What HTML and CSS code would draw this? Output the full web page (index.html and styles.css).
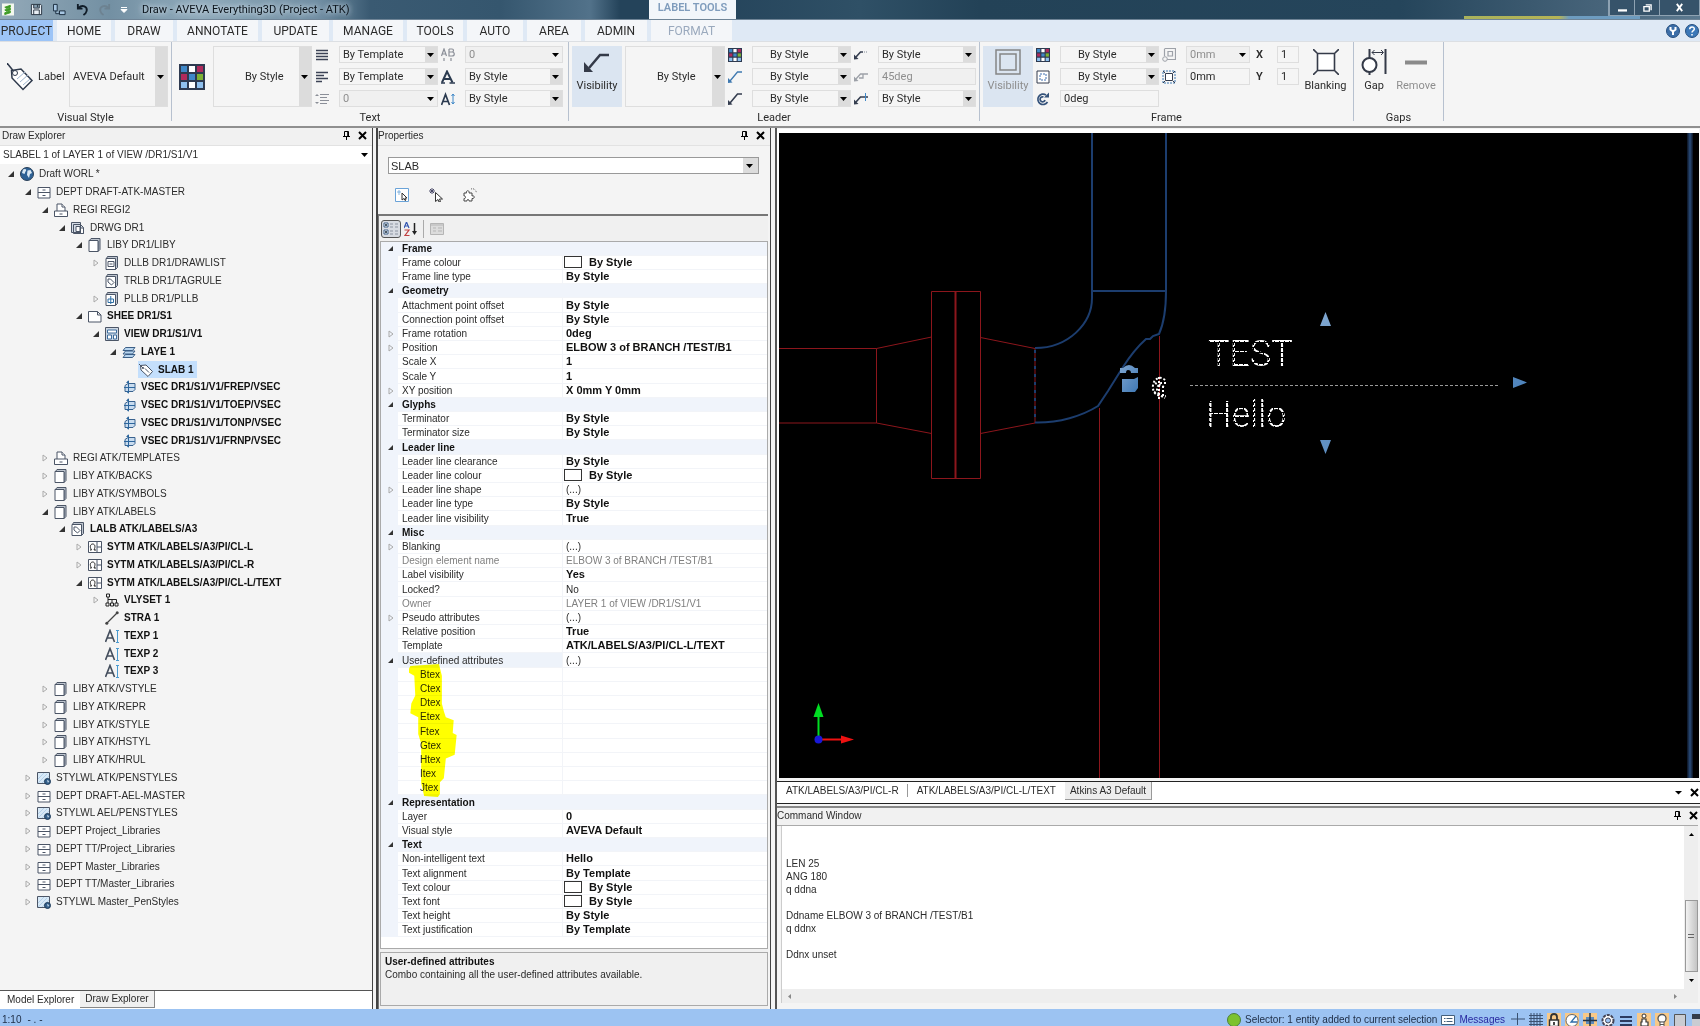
FILE: index.html
```html
<!DOCTYPE html>
<html lang="en">
<head>
<meta charset="utf-8">
<title>Draw - AVEVA Everything3D (Project - ATK)</title>
<link rel="stylesheet" href="styles.css">
</head>
<body>
<svg class="defs" aria-hidden="true">
  <symbol id="world" viewBox="0 0 14 14"><circle cx="7" cy="7" r="6.5" fill="#2e6296" stroke="#2b4058"/><path d="M3 2.5C6 1 7 3 5.500 4.500L4.500 7 2 6zM7.500 3.500l3-.5 1.500 3-2 1-1 4-2-3z" fill="#dceaf5"/></symbol>
  <symbol id="dept" viewBox="0 0 14 14"><path d="M1 2.500h12v10.500H1zM1 7.500h12M5.500 5h3M5.500 10.500h3" fill="#fff" stroke="#4b5566"/></symbol>
  <symbol id="regi" viewBox="0 0 14 14"><path d="M3 8V1h5l3 3v4" fill="#fff" stroke="#4b5566"/><path d="M.5 8h13v5.500H.5zM8 1v3h3M5.500 11h3" fill="#fff" stroke="#4b5566"/></symbol>
  <symbol id="drwg" viewBox="0 0 14 14"><path d="M.5 1.500h9v10h-9zM2.500 3.500h7l3 3v6h-10z" fill="#d5dce6" stroke="#4b5566"/><path d="M5 5.500h4v5H5zM9.500 7h3v5.500h-3z" fill="#fff" stroke="#4b5566"/></symbol>
  <symbol id="liby" viewBox="0 0 14 14"><path d="M3 .5h9v11l-2 2V3H1z" fill="#bdc4ce" stroke="#4b5566"/><path d="M1 2.500h9v11H1z" fill="#fff" stroke="#4b5566"/></symbol>
  <symbol id="dllb" viewBox="0 0 14 14"><path d="M2.500.5h10v11l-2 2H1.500V2.500z" fill="#bdc4ce" stroke="#4b5566"/><path d="M1 2.500h9.500v11H1zM3 5.500h6v5H3zM4.500 8h3" fill="#fff" stroke="#4b5566"/></symbol>
  <symbol id="trlb" viewBox="0 0 14 14"><path d="M2.500.5h10v11l-2 2H1.500V2.500z" fill="#bdc4ce" stroke="#4b5566"/><path d="M1 2.500h9.500v11H1zM3 5h2.500L9 8.500 6.500 11 3 8z" fill="#fff" stroke="#4b5566"/></symbol>
  <symbol id="pllb" viewBox="0 0 14 14"><path d="M2.500.5h10v11l-2 2H1.500V2.500z" fill="#bdc4ce" stroke="#4b5566"/><path d="M1 2.500h9.500v11H1z" fill="#fff" stroke="#4b5566"/><path d="M5.750 4v8M3 7h5.500v3.500H3z" fill="none" stroke="#2c6da3"/></symbol>
  <symbol id="shee" viewBox="0 0 14 14"><path d="M.5 2.500h9l3.500 3.500v7H.5zM9.500 2.500V6H13" fill="#fff" stroke="#4b5566"/></symbol>
  <symbol id="view" viewBox="0 0 14 14"><path d="M.5.500h13v13H.5z" fill="#cdd7e3" stroke="#4b5566"/><path d="M2.500 3h9v3h-9zM2.500 8h4v4h-4zM8.500 8h3v4h-3z" fill="#fff" stroke="#3c6c9c"/></symbol>
  <symbol id="laye" viewBox="0 0 14 14"><path d="M1 12.500 3.500 9.500h9.500L10.500 12.500zM1 9 3.500 6h9.500L10.500 9zM1 5.500 3.500 2.500h9.500L10.500 5.500z" fill="#b8d5ef" stroke="#3c5f86"/></symbol>
  <symbol id="slab" viewBox="0 0 14 14"><path d="M1.500 2.500 7 2l6.500 6.500-4.500 5L2 7z" fill="#fff" stroke="#4b5566"/><path d="M0 1l4 4M6 5.500l4 4" stroke="#4b5566"/><circle cx="4" cy="5" r="1" fill="#4b5566"/></symbol>
  <symbol id="vsec" viewBox="0 0 14 14"><path d="M3 5.500 6 3.500h7v6l-2 2H3z" fill="#c9dcef" stroke="#39628e"/><path d="M2 7.500h11M6.500 1v12" stroke="#2d669d"/><path d="M4 3 6.500 0v3zM4 11h2.500v3z" fill="#2d669d"/></symbol>
  <symbol id="sytm" viewBox="0 0 14 14"><path d="M.5 1.500h13v11H.5zM9 1.500v11M9 7h4.500" fill="#fff" stroke="#4b5566"/><path d="M2 10h1.500C1 6 3 4 4.750 4S8 6 6 10h2" fill="none" stroke="#222"/></symbol>
  <symbol id="vly" viewBox="0 0 14 14"><path d="M1.500 1h3v3h-3zM1 10h3v3H1zM5.500 10h3v3h-3zM10 10h3v3h-3zM3 4v6M3 6.500h8.500V10M7 6.500V10" fill="none" stroke="#222"/></symbol>
  <symbol id="stra" viewBox="0 0 14 14"><path d="M1.500 12.500l11-11" stroke="#444" stroke-width="1.300"/><circle cx="1.800" cy="12.200" r="1.500" fill="#444"/><circle cx="12.200" cy="1.800" r="1.500" fill="#444"/></symbol>
  <symbol id="texp" viewBox="0 0 14 14"><path d="M.5 13 5 1.500 9.500 13M2.500 9h5.500" fill="none" stroke="#434d5c" stroke-width="1.600"/><path d="M12.500 2v11M11 1.500h3M11 13.500h3" stroke="#4a9ad0"/></symbol>
  <symbol id="styl" viewBox="0 0 14 14"><path d="M.5 1.500h12v11H.5z" fill="#d8e9f7" stroke="#4b5566"/><path d="M1 8l6-6M1 12l9-9M5 12l7-7" stroke="#b3d0ea"/><circle cx="10.500" cy="10.500" r="3" fill="#34608c" stroke="#1f3b58"/><path d="M10 9l2 1-1 2z" fill="#dceaf5"/></symbol>
  <symbol id="pin" viewBox="0 0 9 9"><path d="M2.500.500h4v5h-4zM1 5.500h7M4.500 5.500V9M5.700 1v4" fill="none" stroke="#000"/></symbol>
  <symbol id="x" viewBox="0 0 9 9"><path d="M1 1l7 7M8 1L1 8" stroke="#000" stroke-width="2"/></symbol>
  <symbol id="palette" viewBox="0 0 26 26"><path d="M0 0h26v26H0z" fill="#2e3a50"/><path d="M2 2h6v6H2zM10 10h6v6h-6z" fill="#3f88c8"/><path d="M10 2h6v6h-6zM10 18h6v6h-6z" fill="#fff"/><path d="M18 2h6v6h-6zM2 10h6v6H2z" fill="#b02a5c"/><path d="M18 10h6v6h-6z" fill="#7db233"/><path d="M2 18h6v6H2zM18 18h6v6h-6z" fill="#8fc0ee"/></symbol>
  <symbol id="justify" viewBox="0 0 14 14"><path d="M1 2.500h12M1 5.500h12M1 8.500h12M1 11.500h12" stroke="#3c4356" stroke-width="1.600"/></symbol>
  <symbol id="left" viewBox="0 0 14 14"><path d="M1 2.500h12M1 5.500h8M1 8.500h12M1 11.500h6" stroke="#3c4356" stroke-width="1.500"/></symbol>
  <symbol id="spacing" viewBox="0 0 14 14"><path d="M5 2.500h9M5 5.500h7M5 8.500h9M5 11.500h7" stroke="#8b8f98"/><path d="M0 4l2-2 2 2zM0 10l2 2 2-2z" fill="#8b8f98"/></symbol>
  <symbol id="ab" viewBox="0 0 14 14"><path d="M.5 8 3 1l2.500 7M1.500 6h3M8 1h3c2 0 2 3 0 3H8.500M11 4c3 0 3 4 0 4H8V1M3 10v3M10 10v3" fill="none" stroke="#8b8f98" stroke-width="1.200"/></symbol>
  <symbol id="font" viewBox="0 0 14 14"><path d="M1 12.500 6 1.500l5.500 11M3 9h6" fill="none" stroke="#2c3b50" stroke-width="2"/><path d="M0 13h4M8.500 13H14" stroke="#2c3b50" stroke-width="1.500"/></symbol>
  <symbol id="fontht" viewBox="0 0 14 14"><path d="M.5 13 4.500 2.500l4 10.500M2 9.500h5" fill="none" stroke="#2c3b50" stroke-width="1.700"/><path d="M12 2v10M10.500 4 12 2l1.500 2M10.500 10l1.500 2 1.500-2" fill="none" stroke="#3f88c8"/></symbol>
  <symbol id="leadb" viewBox="0 0 14 14"><path d="M14 2H9.500L2 11" fill="none" stroke="#3f79b0" stroke-width="1.300"/><path d="M0 13V8l4.500 4.500z" fill="#3f79b0"/></symbol>
  <symbol id="leadd" viewBox="0 0 14 14"><path d="M14 2H9.500L2 11" fill="none" stroke="#343d4f" stroke-width="1.600"/><path d="M0 13V8l4.500 4.500z" fill="#343d4f"/></symbol>
  <symbol id="leads" viewBox="0 0 14 14"><path d="M9 4H6.500L2 9" fill="none" stroke="#343d4f" stroke-width="1.600"/><path d="M0 11.500V6.500L4.500 11z" fill="#343d4f"/><path d="M10 4h4" stroke="#7e8795" stroke-dasharray="1 1"/></symbol>
  <symbol id="leadg" viewBox="0 0 14 14"><path d="M14 4H6.500L2 9M9 4v4H5" fill="none" stroke="#9da1a8" stroke-width="1.300"/><path d="M0 11.500V6.500L4.500 11z" fill="#9da1a8"/></symbol>
  <symbol id="leadp" viewBox="0 0 14 14"><path d="M14 5H6.500L2 10" fill="none" stroke="#343d4f" stroke-width="1.600"/><path d="M0 12.500V7.500L4.500 12z" fill="#343d4f"/><path d="M11.500 1v8" stroke="#3f88c8"/></symbol>
  <symbol id="dotted" viewBox="0 0 14 14"><path d="M1 1h12v12H1z" fill="#fff" stroke="#343d4f"/><path d="M4 4h6v6H4z" fill="none" stroke="#3f6fb0" stroke-dasharray="2 1"/></symbol>
  <symbol id="rotate" viewBox="0 0 14 14"><path d="M11.500 10A5.200 5.200 0 1 1 10 3M9 8A2.500 2.500 0 1 1 7.500 5" fill="none" stroke="#34527a" stroke-width="1.700"/><path d="M8 5.500h5V.5z" fill="#34527a"/></symbol>
  <symbol id="offs" viewBox="0 0 14 14"><path d="M2.500.500h11v11H5M6 3.500h4.500v4.500H6zM2.500 1v7" fill="none" stroke="#9da1a8" stroke-width="1.200"/><circle cx="3" cy="11" r="2.300" fill="#f4f4f4" stroke="#9da1a8"/></symbol>
  <symbol id="marg" viewBox="0 0 14 14"><path d="M1 1h12v12H1z" fill="none" stroke="#3f79b0" stroke-dasharray="2 1"/><path d="M3.500 3.500h7v7h-7zM1 1l2 2M13 1l-2 2M1 13l2-2M13 13l-2-2" fill="#fff" stroke="#343d4f"/></symbol>
</svg>

<header class="titlebar">
  <svg class="logo" viewBox="0 0 13 13"><path d="M0 0h13v13H0z" fill="#f4f8ee"/><path d="M3 4l6-2v2L5 5.500zM3 7l6-2v2L5 8.500zM3 10l6-2v2l-6 2z" fill="#3d9a24" stroke="#3d9a24"/></svg>
  <svg class="qa" viewBox="0 0 14 14"><path d="M1.500 1.500h10l1 1v10h-11zM4 1.500v4h6v-4M4 12.500v-5h6v5M8 2v2.500" fill="#e8eef4" stroke="#26323f"/></svg>
  <svg class="qa link" viewBox="0 0 14 14"><path d="M.5 1.500h4v7h-4zM7 8.500h6v4H7zM3 8.500v3h4" fill="#a7c6e2" stroke="#16283a"/></svg>
  <svg class="qa undo" viewBox="0 0 14 14"><path d="M2 1v5h5M2.500 5.500C7 1 12.500 4 11.500 8.500 11 11 9.500 12 8 13" fill="none" stroke="#101c28" stroke-width="2"/></svg>
  <svg class="qa redo" viewBox="0 0 14 14"><path d="M12 1v5H7M11.500 5.500C7 1 1.500 4 2.500 8.500 3 11 4.500 12 6 13" fill="none" stroke="#66747f" stroke-width="2"/></svg>
  <svg class="more" viewBox="0 0 8 8"><path d="M1 1.500h6M1 3.500l3 3 3-3z" fill="#fff" stroke="#fff"/></svg>
  <h1>Draw - AVEVA Everything3D (Project - ATK)</h1>
  <span class="context">LABEL TOOLS</span>
  <span class="glass"></span>
  <div class="winbtns">
    <button aria-label="Minimise"><svg viewBox="0 0 10 10"><path d="M0 7h10v2.500H0z" fill="#fff"/></svg></button>
    <button aria-label="Restore"><svg viewBox="0 0 10 10"><path d="M3 2h6v6M1 4h6v5H1z" fill="none" stroke="#fff" stroke-width="1.500"/></svg></button>
    <button class="close" aria-label="Close"><svg viewBox="0 0 10 10"><path d="M2 1l6 8M8 1L2 9" stroke="#fff" stroke-width="2"/></svg></button>
  </div>
</header>

<nav class="tabs">
  <button class="project">PROJECT</button>
  <button class="w53">HOME</button>
  <button class="w57">DRAW</button>
  <button class="w81">ANNOTATE</button>
  <button class="w67">UPDATE</button>
  <button class="w70">MANAGE</button>
  <button class="w56">TOOLS</button>
  <button class="w56">AUTO</button>
  <button class="w53">AREA</button>
  <button class="w62">ADMIN</button>
  <button class="w81 format">FORMAT</button>
  <span class="help">
    <svg viewBox="0 0 14 14"><circle cx="7" cy="7" r="6.500" fill="#3c6ea8" stroke="#28507f"/><path d="M4.500 3v2.500L7 7.500l2.500-2V3M7 7v4" fill="none" stroke="#fff" stroke-width="2"/></svg>
    <svg viewBox="0 0 14 14"><circle cx="7" cy="7" r="6.500" fill="#3c78b8" stroke="#28507f"/><path d="M4.700 5.200c0-3 4.800-3 4.600 0C9.200 6.700 7 6.500 7 8.500M7 10v1.500" fill="none" stroke="#fff" stroke-width="1.500"/></svg>
  </span>
</nav>

<section class="ribbon" aria-label="Format">
  <div class="group">
    <div class="tools g-visual">
      <svg class="span tag" viewBox="0 0 27 28"><path d="M4.500 7.500 14 6l11 11.500L16 26.500 5 15z" fill="#fff" stroke="#2f3a4c" stroke-width="1.500"/><path d="M10 16l8-7M13 19l8-7M16 22l7-6" stroke="#9fb6cf"/><path d="M0 0l8 10" stroke="#2f3a4c" stroke-width="1.500"/><circle cx="8" cy="10" r="2.500" fill="#fff" stroke="#2f3a4c"/></svg>
      <label class="span" for="vs">Label</label>
      <select id="vs" class="span"><option>AVEVA Default</option></select>
    </div>
    <h2>Visual Style</h2>
  </div>
  <div class="group">
    <div class="tools g-text">
      <svg class="span big"><use href="#palette"/></svg>
      <select class="span pad28" aria-label="Text colour"><option>By Style</option></select>
      <svg><use href="#justify"/></svg><select aria-label="Alignment"><option>By Template</option></select>
      <svg><use href="#ab"/></svg><select aria-label="Spacing" disabled><option>0</option></select>
      <svg><use href="#left"/></svg><select aria-label="Justification"><option>By Template</option></select>
      <svg><use href="#font"/></svg><select aria-label="Font"><option>By Style</option></select>
      <svg><use href="#spacing"/></svg><select aria-label="Line spacing" disabled><option>0</option></select>
      <svg><use href="#fontht"/></svg><select aria-label="Height"><option>By Style</option></select>
    </div>
    <h2>Text</h2>
  </div>
  <div class="group">
    <div class="tools g-leader">
      <button class="span tool on"><svg viewBox="0 0 26 26"><path d="M25 6H16L5 19" fill="none" stroke="#343a48" stroke-width="2.500"/><path d="M0 23V13l9 10z" fill="#343a48"/></svg>Visibility</button>
      <select class="span pad28" aria-label="Leader style"><option>By Style</option></select>
      <svg><use href="#palette"/></svg><select class="pad14" aria-label="Leader colour"><option>By Style</option></select>
      <svg><use href="#leads"/></svg><select aria-label="Clearance"><option>By Style</option></select>
      <svg><use href="#leadb"/></svg><select class="pad14" aria-label="Line type"><option>By Style</option></select>
      <svg><use href="#leadg"/></svg><input aria-label="Angle" value="45deg" disabled>
      <svg><use href="#leadd"/></svg><select class="pad14" aria-label="Shape"><option>By Style</option></select>
      <svg><use href="#leadp"/></svg><select aria-label="Terminator size"><option>By Style</option></select>
    </div>
    <h2>Leader</h2>
  </div>
  <div class="group">
    <div class="tools g-frame">
      <button class="span tool on dim"><svg viewBox="0 0 26 26"><path d="M1 1h24v24H1zM5 5h16v16H5z" fill="none" stroke="#858585" stroke-width="1.500"/></svg>Visibility</button>
      <svg><use href="#palette"/></svg><select class="pad14" aria-label="Frame colour"><option>By Style</option></select>
      <svg><use href="#offs"/></svg><select aria-label="Offset" disabled><option>0mm</option></select>
      <label for="sx">X</label><input id="sx" value="1">
      <button class="span tool"><svg viewBox="0 0 26 26"><path d="M4.500 4.500h17v17h-17zM0 0l4.500 4.500M26 0l-4.500 4.500M0 26l4.500-4.500M26 26l-4.500-4.500" fill="#fff" stroke="#343a48" stroke-width="1.600"/></svg>Blanking</button>
      <svg><use href="#dotted"/></svg><select class="pad14" aria-label="Frame line type"><option>By Style</option></select>
      <svg><use href="#marg"/></svg><input aria-label="Margin" value="0mm">
      <label for="sy">Y</label><input id="sy" value="1">
      <svg><use href="#rotate"/></svg><input aria-label="Rotation" value="0deg">
    </div>
    <h2>Frame</h2>
  </div>
  <div class="group">
    <div class="tools g-gaps">
      <button class="span tool"><svg viewBox="0 0 26 26"><circle cx="8.500" cy="16" r="7" fill="#fff" stroke="#343a48" stroke-width="2"/><path d="M8.500 0v9M8.500 23v3M24.500 0v25" stroke="#343a48" stroke-width="2"/><path d="M11 3.500h11M13.500 1l-2.500 2.500L13.500 6M20 1l2.500 2.500L20 6" fill="none" stroke="#343a48"/></svg>Gap</button>
      <button class="span tool" disabled><svg viewBox="0 0 26 26"><path d="M2 11.500h22v4H2z" fill="#8a8a8a"/></svg>Remove</button>
    </div>
    <h2>Gaps</h2>
  </div>
</section>

<main>
  <aside class="explorer">
    <div class="head"><h2>Draw Explorer</h2><svg><use href="#pin"/></svg><svg><use href="#x"/></svg></div>
    <select class="current" aria-label="Current element"><option>SLABEL 1 of LAYER 1 of VIEW /DR1/S1/V1</option></select>
    <ul class="tree" role="tree">
      <li class="l0 open"><svg><use href="#world"/></svg>Draft WORL *</li>
      <li class="l1 open"><svg><use href="#dept"/></svg>DEPT DRAFT-ATK-MASTER</li>
      <li class="l2 open"><svg><use href="#regi"/></svg>REGI REGI2</li>
      <li class="l3 open"><svg><use href="#drwg"/></svg>DRWG DR1</li>
      <li class="l4 open"><svg><use href="#liby"/></svg>LIBY DR1/LIBY</li>
      <li class="l5 shut"><svg><use href="#dllb"/></svg>DLLB DR1/DRAWLIST</li>
      <li class="l5"><svg><use href="#trlb"/></svg>TRLB DR1/TAGRULE</li>
      <li class="l5 shut"><svg><use href="#pllb"/></svg>PLLB DR1/PLLB</li>
      <li class="l4 open b"><svg><use href="#shee"/></svg>SHEE DR1/S1</li>
      <li class="l5 open b"><svg><use href="#view"/></svg>VIEW DR1/S1/V1</li>
      <li class="l6 open b"><svg><use href="#laye"/></svg>LAYE 1</li>
      <li class="l7 b sel"><span><svg><use href="#slab"/></svg>SLAB 1</span></li>
      <li class="l6 b"><svg><use href="#vsec"/></svg>VSEC DR1/S1/V1/FREP/VSEC</li>
      <li class="l6 b"><svg><use href="#vsec"/></svg>VSEC DR1/S1/V1/TOEP/VSEC</li>
      <li class="l6 b"><svg><use href="#vsec"/></svg>VSEC DR1/S1/V1/TONP/VSEC</li>
      <li class="l6 b"><svg><use href="#vsec"/></svg>VSEC DR1/S1/V1/FRNP/VSEC</li>
      <li class="l2 shut"><svg><use href="#regi"/></svg>REGI ATK/TEMPLATES</li>
      <li class="l2 shut"><svg><use href="#liby"/></svg>LIBY ATK/BACKS</li>
      <li class="l2 shut"><svg><use href="#liby"/></svg>LIBY ATK/SYMBOLS</li>
      <li class="l2 open"><svg><use href="#liby"/></svg>LIBY ATK/LABELS</li>
      <li class="l3 open b"><svg><use href="#trlb"/></svg>LALB ATK/LABELS/A3</li>
      <li class="l4 shut b"><svg><use href="#sytm"/></svg>SYTM ATK/LABELS/A3/PI/CL-L</li>
      <li class="l4 shut b"><svg><use href="#sytm"/></svg>SYTM ATK/LABELS/A3/PI/CL-R</li>
      <li class="l4 open b"><svg><use href="#sytm"/></svg>SYTM ATK/LABELS/A3/PI/CL-L/TEXT</li>
      <li class="l5 shut b"><svg><use href="#vly"/></svg>VLYSET 1</li>
      <li class="l5 b"><svg><use href="#stra"/></svg>STRA 1</li>
      <li class="l5 b"><svg><use href="#texp"/></svg>TEXP 1</li>
      <li class="l5 b"><svg><use href="#texp"/></svg>TEXP 2</li>
      <li class="l5 b"><svg><use href="#texp"/></svg>TEXP 3</li>
      <li class="l2 shut"><svg><use href="#liby"/></svg>LIBY ATK/VSTYLE</li>
      <li class="l2 shut"><svg><use href="#liby"/></svg>LIBY ATK/REPR</li>
      <li class="l2 shut"><svg><use href="#liby"/></svg>LIBY ATK/STYLE</li>
      <li class="l2 shut"><svg><use href="#liby"/></svg>LIBY ATK/HSTYL</li>
      <li class="l2 shut"><svg><use href="#liby"/></svg>LIBY ATK/HRUL</li>
      <li class="l1 shut"><svg><use href="#styl"/></svg>STYLWL ATK/PENSTYLES</li>
      <li class="l1 shut"><svg><use href="#dept"/></svg>DEPT DRAFT-AEL-MASTER</li>
      <li class="l1 shut"><svg><use href="#styl"/></svg>STYLWL AEL/PENSTYLES</li>
      <li class="l1 shut"><svg><use href="#dept"/></svg>DEPT Project_Libraries</li>
      <li class="l1 shut"><svg><use href="#dept"/></svg>DEPT TT/Project_Libraries</li>
      <li class="l1 shut"><svg><use href="#dept"/></svg>DEPT Master_Libraries</li>
      <li class="l1 shut"><svg><use href="#dept"/></svg>DEPT TT/Master_Libraries</li>
      <li class="l1 shut"><svg><use href="#styl"/></svg>STYLWL Master_PenStyles</li>
    </ul>
    <div class="foot"><button>Model Explorer</button><button class="active">Draw Explorer</button></div>
  </aside>

  <aside class="properties">
    <div class="head"><h2>Properties</h2><svg><use href="#pin"/></svg><svg><use href="#x"/></svg></div>
    <select class="type" aria-label="Element type"><option>SLAB</option></select>
    <div class="picks">
      <svg viewBox="0 0 14 14"><path d="M.5.500h13v13H.5z" fill="#fff" stroke="#6aa3d8"/><path d="M4 2v5M2 4h4" stroke="#6aa3d8" stroke-width=".8"/><path d="M7 5v7l2-1.500 1 2 1-.5-1-2h2z" fill="#fff" stroke="#333"/></svg>
      <svg viewBox="0 0 14 14"><path d="M3 0v6M0 3h6M1 1l4 4M5 1L1 5" stroke="#4a4a68"/><path d="M6.500 4.500v9l2.500-2 1 2.500 1.500-.5-1-2.500h3z" fill="#fff" stroke="#333"/></svg>
      <svg viewBox="0 0 14 14"><path d="M1 5h2.500c-1-3 3.500-3 2.500 0h3v3c3-1 3 3 0 2.500V13H6c.5-2-2.500-2-2 0H1v-2.500c2 .5 2-3 0-2.500z" fill="#fff" stroke="#444"/><path d="M8 1c3-1 5 1 5.500 4" fill="none" stroke="#666" stroke-dasharray="1 1"/></svg>
    </div>
    <div class="sheet">
      <div class="sort">
        <button class="pressed" aria-label="Categorised"><svg viewBox="0 0 16 14"><path d="M1 1h4v4H1zM1 8h4v4H1z" fill="#fff" stroke="#3c5f86"/><path d="M2 3h2M3 2v2M2 10h2M3 9v2" stroke="#123"/><path d="M7 2h3M7 5h3M7 9h3M7 12h3M12 2h3M12 5h3M12 9h3M12 12h3" stroke="#8b93a0"/></svg></button>
        <button aria-label="Alphabetical"><svg viewBox="0 0 14 14"><path d="M0 6 2.500 0 5 6M1 4h3" fill="none" stroke="#3355b0" stroke-width="1.200"/><path d="M.5 8H5l-4 5.500h4.500" fill="none" stroke="#c04040" stroke-width="1.200"/><path d="M10.500 1v9" stroke="#222" stroke-width="1.500"/><path d="M8 9h5l-2.500 4z" fill="#222"/></svg></button>
        <span class="bar"></span>
        <button aria-label="Property pages" disabled><svg viewBox="0 0 14 14"><path d="M.5 1.500h13v11H.5z" fill="#dcdcdc" stroke="#b5b5b5"/><path d="M1 3h12M3 6h3M8 6h4M3 9h3M8 9h4" stroke="#b5b5b5"/></svg></button>
      </div>
      <div class="gridbox">
        <svg class="marker" viewBox="0 0 48 136" aria-hidden="true"><path d="M1 2 30 0l3 12 0 28 2 8 2 6 8 3-1 13 4 2-2 20-9 4-2 20-4 4 0 12-2 3-14-1-3-13 0-40-3-10 0-17-8-4 1-10 4-8-1-20-7-4z" fill="#ff0"/></svg>
        <table>
          <colgroup><col class="c-mark"><col class="c-name"><col></colgroup>
          <tbody>
            <tr class="cat"><th class="m open"></th><th colspan="2">Frame</th></tr>
            <tr><td class="m"></td><td>Frame colour</td><td class="v"><i></i>By Style</td></tr>
            <tr><td class="m"></td><td>Frame line type</td><td class="v">By Style</td></tr>
            <tr class="cat"><th class="m open"></th><th colspan="2">Geometry</th></tr>
            <tr><td class="m"></td><td>Attachment point offset</td><td class="v">By Style</td></tr>
            <tr><td class="m"></td><td>Connection point offset</td><td class="v">By Style</td></tr>
            <tr><td class="m shut"></td><td>Frame rotation</td><td class="v">0deg</td></tr>
            <tr><td class="m shut"></td><td>Position</td><td class="v">ELBOW 3 of BRANCH /TEST/B1</td></tr>
            <tr><td class="m"></td><td>Scale X</td><td class="v">1</td></tr>
            <tr><td class="m"></td><td>Scale Y</td><td class="v">1</td></tr>
            <tr><td class="m shut"></td><td>XY position</td><td class="v">X 0mm Y 0mm</td></tr>
            <tr class="cat"><th class="m open"></th><th colspan="2">Glyphs</th></tr>
            <tr><td class="m"></td><td>Terminator</td><td class="v">By Style</td></tr>
            <tr><td class="m"></td><td>Terminator size</td><td class="v">By Style</td></tr>
            <tr class="cat"><th class="m open"></th><th colspan="2">Leader line</th></tr>
            <tr><td class="m"></td><td>Leader line clearance</td><td class="v">By Style</td></tr>
            <tr><td class="m"></td><td>Leader line colour</td><td class="v"><i></i>By Style</td></tr>
            <tr><td class="m shut"></td><td>Leader line shape</td><td class="v n">(...)</td></tr>
            <tr><td class="m"></td><td>Leader line type</td><td class="v">By Style</td></tr>
            <tr><td class="m"></td><td>Leader line visibility</td><td class="v">True</td></tr>
            <tr class="cat"><th class="m open"></th><th colspan="2">Misc</th></tr>
            <tr><td class="m shut"></td><td>Blanking</td><td class="v n">(...)</td></tr>
            <tr class="ro"><td class="m"></td><td>Design element name</td><td class="v n">ELBOW 3 of BRANCH /TEST/B1</td></tr>
            <tr><td class="m"></td><td>Label visibility</td><td class="v">Yes</td></tr>
            <tr><td class="m"></td><td>Locked?</td><td class="v n">No</td></tr>
            <tr class="ro"><td class="m"></td><td>Owner</td><td class="v n">LAYER 1 of VIEW /DR1/S1/V1</td></tr>
            <tr><td class="m shut"></td><td>Pseudo attributes</td><td class="v n">(...)</td></tr>
            <tr><td class="m"></td><td>Relative position</td><td class="v">True</td></tr>
            <tr><td class="m"></td><td>Template</td><td class="v">ATK/LABELS/A3/PI/CL-L/TEXT</td></tr>
            <tr><td class="m open"></td><td class="here">User-defined attributes</td><td class="v n">(...)</td></tr>
            <tr><td class="m"></td><td class="sub">Btex</td><td class="v"></td></tr>
            <tr><td class="m"></td><td class="sub">Ctex</td><td class="v"></td></tr>
            <tr><td class="m"></td><td class="sub">Dtex</td><td class="v"></td></tr>
            <tr><td class="m"></td><td class="sub">Etex</td><td class="v"></td></tr>
            <tr><td class="m"></td><td class="sub">Ftex</td><td class="v"></td></tr>
            <tr><td class="m"></td><td class="sub">Gtex</td><td class="v"></td></tr>
            <tr><td class="m"></td><td class="sub">Htex</td><td class="v"></td></tr>
            <tr><td class="m"></td><td class="sub">Itex</td><td class="v"></td></tr>
            <tr><td class="m"></td><td class="sub">Jtex</td><td class="v"></td></tr>
            <tr class="cat"><th class="m open"></th><th colspan="2">Representation</th></tr>
            <tr><td class="m"></td><td>Layer</td><td class="v">0</td></tr>
            <tr><td class="m"></td><td>Visual style</td><td class="v">AVEVA Default</td></tr>
            <tr class="cat"><th class="m open"></th><th colspan="2">Text</th></tr>
            <tr><td class="m"></td><td>Non-intelligent text</td><td class="v">Hello</td></tr>
            <tr><td class="m"></td><td>Text alignment</td><td class="v">By Template</td></tr>
            <tr><td class="m"></td><td>Text colour</td><td class="v"><i></i>By Style</td></tr>
            <tr><td class="m"></td><td>Text font</td><td class="v"><i></i>By Style</td></tr>
            <tr><td class="m"></td><td>Text height</td><td class="v">By Style</td></tr>
            <tr><td class="m"></td><td>Text justification</td><td class="v">By Template</td></tr>
          </tbody>
        </table>
      </div>
      <div class="hint"><h3>User-defined attributes</h3><p>Combo containing all the user-defined attributes available.</p></div>
    </div>
  </aside>

  <section class="work">
    <div class="viewport">
      <svg class="canvas">
        <defs>
          <pattern id="dash" width="5" height="5" patternUnits="userSpaceOnUse"><path d="M0 0h5v5H0z" fill="#000"/><path d="M0 0h4v2h1v2H1V3H0z" fill="#fff"/></pattern>
          <linearGradient id="manip" x1="0" y1="0" x2="1" y2="1"><stop offset="0" stop-color="#7fa6d0"/><stop offset="1" stop-color="#3f78b4"/></linearGradient>
        </defs>
        <g fill="none" stroke="#8c161c" stroke-width="1">
          <path d="M0 215.500H97.500V290M0 290H97.500M97.500 215.500L152.500 204M97.500 290L152.500 300.500M152.500 158.500h49v187h-49zM201.500 204.500L256 215.500M201.500 300.500L256 290M256 215.500V290M320.500 275V2000M380.500 203V2000"/>
          <path d="M176.500 158v188" stroke-width="2"/>
        </g>
        <g fill="none" stroke="#1c3d6e" stroke-width="2">
          <path d="M313 0V165C313 190 290 215 256 215M387 0V158C387 176 385 190 380 201L374 203 371 206 367 206C357 215 351 223 344 234L329 258 319 273C303 283 280 290 256 289.500M313 158H387"/>
          <path d="M256 217V289" stroke-dasharray="3 5"/>
        </g>
        <g fill="url(#manip)">
          <path d="M341 240v-5h3q6-6 12 0h3v5h-7q0-3-3-3-2 0-2 3zM343 246h12l4-2v11l-3 4h-13z"/>
          <path d="M546.500 179l5.500 14h-11zM748 249.500L734 255v-11zM546.500 321l5.500-14h-11z"/>
        </g>
        <path d="M386 247c-5-5-11-1-12 5-1 8 4 12 13 11M380 244v22M387 250h-5q-4 3-4 6t3 6M384 253v11M376 250l9 4M375 259l11 6" fill="none" stroke="#fff" stroke-width="2" stroke-dasharray="2 2"/>
        <path d="M411 252.500H719" stroke="#999" stroke-dasharray="3 2"/>
        <text class="plot" x="429" y="233">TEST</text>
        <text class="plot" x="427" y="294">Hello</text>
        <path d="M39.500 606V582" stroke="#0d2" stroke-width="2"/><path d="M39.500 570l5 14h-10z" fill="#0d2"/>
        <path d="M39 606.500H64" stroke="#e11" stroke-width="2"/><path d="M75 606.500l-13 4v-8z" fill="#e11"/>
        <circle cx="39.500" cy="606.500" r="4" fill="#1818d8"/>
      </svg>
      <span class="edge"></span>
    </div>
    <div class="doctabs">
      <button>ATK/LABELS/A3/PI/CL-R</button><button class="second">ATK/LABELS/A3/PI/CL-L/TEXT</button><button class="active">Atkins A3 Default</button>
      <svg class="dd" viewBox="0 0 9 9"><path d="M1 3h7L4.500 6.500z"/></svg><svg><use href="#x"/></svg>
    </div>
    <div class="command">
      <div class="head"><h2>Command Window</h2><svg><use href="#pin"/></svg><svg><use href="#x"/></svg></div>
      <div class="console">
        <textarea aria-label="Command Window" spellcheck="false">


LEN 25
ANG 180
q ddna

Ddname ELBOW 3 of BRANCH /TEST/B1
q ddnx

Ddnx unset</textarea>
        <div class="vbar"><svg viewBox="0 0 9 9"><path d="M2 6h5L4.500 3z"/></svg><span class="thumb"></span><svg viewBox="0 0 9 9"><path d="M2 3h5L4.500 6z"/></svg></div>
        <div class="hbar"><svg viewBox="0 0 9 9"><path d="M6 2v5L3 4.500z"/></svg><svg viewBox="0 0 9 9"><path d="M3 2v5l3-2.500z"/></svg></div>
      </div>
    </div>
  </section>
</main>

<footer class="status">
  <span>1:10</span><span class="coord">- . -</span>
  <svg class="lamp" viewBox="0 0 14 14"><circle cx="7" cy="7" r="6.500" fill="#7cc22e" stroke="#4d7f3c"/></svg>
  <span class="sel-msg">Selector: 1 entity added to current selection</span>
  <svg viewBox="0 0 14 14"><path d="M.5 2.500h13v9H.5z" fill="#fff" stroke="#44607c"/><path d="M3 5.500h1.500M3 8.500h1.500M5.500 5.500h6M5.500 8.500h6" stroke="#44607c"/></svg>
  <a href="#messages">Messages</a>
  <div class="toggles">
    <svg viewBox="0 0 14 14"><path d="M0 6h14M6.500 0v12" stroke="#3a5170"/></svg>
    <svg viewBox="0 0 14 14"><path d="M0 2.500h14M0 5.500h14M0 8.500h14M0 11.500h14M2 0v14M5 0v14M8 0v14M11 0v14" stroke="#3a5170"/></svg>
    <svg class="lit" viewBox="0 0 14 14"><path d="M2.500 7h9v6.500h-9z" fill="#fff" stroke="#333" stroke-width="1.500"/><path d="M4 7V4q0-3 3-3t3 3v3M7 9v3" fill="none" stroke="#333" stroke-width="1.800"/></svg>
    <svg class="lit" viewBox="0 0 14 14"><circle cx="7" cy="7.500" r="6" fill="#fff" stroke="#666"/><path d="M11 3L6 9h6" fill="none" stroke="#2f6eaa" stroke-width="1.300"/></svg>
    <svg class="lit" viewBox="0 0 14 14"><path d="M3 4h8v7H3z" fill="#5d8bbb"/><path d="M7 0v14M0 7.500h14" stroke="#234" stroke-width="1.500"/></svg>
    <svg viewBox="0 0 14 14"><circle cx="7" cy="7.500" r="5.500" fill="#fff" stroke="#445" stroke-width="2" stroke-dasharray="3 1"/><circle cx="7" cy="7.500" r="2.500" fill="#9cc3f2" stroke="#445"/></svg>
    <svg viewBox="0 0 14 14"><path d="M1 4h12M1 8h12M1 12h12" stroke="#2c3b60" stroke-width="2"/></svg>
    <svg class="lit" viewBox="0 0 14 14"><circle cx="7" cy="3" r="2" fill="#fff" stroke="#333"/><path d="M5 6h4v3h2v4H4V9h1z" fill="#fff" stroke="#333" stroke-width="1.200"/></svg>
    <svg class="lit" viewBox="0 0 14 14"><circle cx="7" cy="5.500" r="4" fill="#fff" stroke="#555" stroke-width="1.300"/><path d="M5 9h4v4.500H5zM5 11.500h4" fill="#fff" stroke="#555"/></svg>
    <svg viewBox="0 0 14 14"><path d="M1.500 1.500h11v12h-11z" fill="#c9ccd2" stroke="#555"/></svg>
    <svg viewBox="0 0 14 14"><path d="M1 1h13v5H1z" fill="#333b49"/><path d="M1 6h13v8H1z" fill="#c9ccd2"/></svg>
  </div>
</footer>
</body>
</html>
```
FILE: styles.css
```css
* { box-sizing: border-box; }
html, body { height: 100%; }
body {
  margin: 0;
  display: flex;
  flex-direction: column;
  overflow: hidden;
  background: #f4f4f4;
  color: #2b2b2b;
  font: 10px/14px "Liberation Sans", Arial, sans-serif;
}
h1, h2, h3, p, ul { margin: 0; padding: 0; font: inherit; list-style: none; }
button, select, input, textarea { margin: 0; padding: 0; border: 0; border-radius: 0; background: none; font: inherit; color: inherit; white-space: nowrap; }
svg { display: block; flex: none; }
.defs { display: none; }

/* title bar */
.titlebar {
  flex: none;
  height: 20px;
  display: flex;
  align-items: center;
  position: relative;
  padding-left: 2px;
  background: linear-gradient(90deg, #93a9b8 0, #7390a3 110px, #8fa9ba 200px, #6f8da2 320px, #3a5a72 370px, #35566e 500px, #52728a 590px, #24435a 620px, #24435a 700px, #2f5066 860px, #234257 980px, #25455b 1400px, #47647a 1600px, #5c7a90 100%);
  border-bottom: 1px solid #6f8496;
  font: 11px/14px Roboto, "Open Sans", sans-serif;
}
.logo { width: 12px; height: 13px; margin-right: 16px; }
.qa { width: 13px; height: 13px; margin-right: 10px; }
.undo { margin-right: 9px; }
.redo { opacity: .5; }
.more { width: 8px; height: 8px; margin: 0 14px 0 -1px; }
.titlebar h1 { color: #0b141c; text-shadow: 0 0 5px #dce6ee, 0 0 8px #c7d6e2; }
.context {
  position: absolute;
  left: 649px;
  top: 0;
  width: 87px;
  height: 19px;
  line-height: 16px;
  text-align: center;
  background: #f2f6fa;
  color: #7f9cbc;
  font-weight: 600;
}
.glass { position: absolute; right: 60px; bottom: 0; width: 176px; height: 3px; background: linear-gradient(90deg, #a9b25c, #b5b456 95px, #6d9cc0 105px, #6d9cc0); }
.winbtns { margin-left: auto; align-self: flex-start; display: flex; height: 16px; border: 1px solid #8ea2b2; border-top: 0; background: #36536a; position: relative; }
.winbtns button { width: 25px; display: grid; place-items: center; border-left: 1px solid #8ea2b2; }
.winbtns svg { width: 9px; height: 9px; }
.winbtns .close { width: 40px; }

/* ribbon tabs */
.tabs { flex: none; height: 21px; display: flex; gap: 4px; background: #dfe9f5; font: 12px/20px Roboto, "Open Sans", sans-serif; }
.tabs button { background: #f4f6f9; height: 21px; text-align: center; }
.tabs .project { width: 53px; background: #9cc4f7; }
.tabs .w53 { width: 54px; }
.tabs .w56 { width: 56px; }
.tabs .w57 { width: 58px; }
.tabs .w62 { width: 62px; }
.tabs .w67 { width: 67px; }
.tabs .w70 { width: 70px; }
.tabs .w81 { width: 81px; }
.tabs .format { color: #9aa9bd; }
.help { margin-left: auto; display: flex; gap: 5px; align-items: center; padding-right: 1px; }
.help svg { width: 14px; height: 14px; }

/* ribbon */
.ribbon { flex: none; height: 87px; display: flex; border-top: 1px solid #dcdfe3; border-bottom: 2px solid #8f8f8f; background: #f5f5f5; font: 11px/14px Roboto, "Open Sans", sans-serif; }
.group { position: relative; display: flex; flex-direction: column; padding: 4px 3px 0; border-right: 1px solid #b7c1cf; height: 79px; }
.group h2 { text-align: center; padding-top: 4px; }
.tools { display: grid; grid-template-rows: repeat(3, 17px); row-gap: 5px; column-gap: 3px; align-items: center; }
.tools > svg { width: 14px; height: 14px; }
.tools .span { grid-row: 1 / span 3; }
.tools > select.span, .tools > button.span { align-self: stretch; }
.g-visual { grid-template-columns: 28px 28px 99px; padding-left: 4px; }
.g-text { grid-template-columns: 31px 99px 21px 99px 21px 98px; padding: 0 2px 0 4px; }
.g-leader { grid-template-columns: 50px 100px 21px 99px 21px 98px; }
.g-frame { grid-template-columns: 50px 21px 99px 21px 64px 21px 22px 47px; padding-right: 1px; }
.g-gaps { grid-template-columns: 32px 46px; padding: 0 1px; }
.g-frame .span:nth-of-type(2) { grid-column: 8; }
.tools > svg.tag { width: 27px; height: 28px; }
.tools > svg.big { width: 26px; height: 26px; }
select {
  appearance: none;
  border: 1px solid #dedede;
  background: url("data:image/svg+xml,%3Csvg xmlns='http://www.w3.org/2000/svg' viewBox='0 0 7 4'%3E%3Cpath d='M0 0h7L3.500 4z'/%3E%3C/svg%3E") right 3px center / 7px 4px no-repeat, linear-gradient(#dcdcdc, #dcdcdc) right / 12px 100% no-repeat;
}
.tools select, .tools input { width: 100%; height: 17px; padding-left: 3px; border: 1px solid #dedede; min-width: 0; }
.tools select.span { height: auto; }
.tools select.pad28 { padding-left: 31px; }
.tools select.pad14 { padding-left: 17px; }
.tools select:disabled { opacity: 1; color: #8e8e8e; background-color: #f0f0f0; background-size: 7px 4px, 0 0; }
.tools input:disabled { color: #8e8e8e; background: #f0f0f0; }
.tools label[for="sx"], .tools label[for="sy"] { font-weight: 600; padding-left: 3px; }
.tool { display: flex; flex-direction: column; align-items: center; gap: 4px; padding-top: 3px; }
.tool svg { width: 26px; height: 26px; }
.tool.on { background: #dbe5f1; }
.tool.dim, .tool:disabled { color: #8e8e8e; }

/* panes */
main { flex: 1; min-height: 0; display: flex; }
.head { flex: none; display: flex; align-items: center; gap: 7px; height: 18px; padding: 0 5px 2px 2px; background: #f1f1f1; border-bottom: 1px solid #e2e2e2; }
.head h2 { flex: 1; }
.head svg, .doctabs svg { width: 9px; height: 9px; }
.explorer { flex: none; width: 373px; display: flex; flex-direction: column; border-right: 1px solid #444; }
.current { flex: none; height: 18px; padding-left: 3px; border: 0; margin-right: 1px; background-color: #fff; background-size: 7px 4px, 0 0; }
.tree { flex: 1; min-height: 0; display: grid; grid-auto-rows: 18px 18px 18px 17px; align-content: start; overflow: hidden; padding-top: 1px; }
.tree li, .tree span { display: flex; align-items: center; gap: 5px; white-space: nowrap; }
.tree li { padding-left: 20px; }
.tree svg { width: 14px; height: 14px; }
.tree .b { font-weight: bold; color: #111; }
.tree .open, .tree .shut { background: url("data:image/svg+xml,%3Csvg xmlns='http://www.w3.org/2000/svg' viewBox='0 0 6 6'%3E%3Cpath d='M6 0v6H0z' fill='%23333'/%3E%3C/svg%3E") 8px center / 6px 6px no-repeat; }
.tree .shut { background-image: url("data:image/svg+xml,%3Csvg xmlns='http://www.w3.org/2000/svg' viewBox='0 0 6 8'%3E%3Cpath d='M1 1v6l4-3z' fill='none' stroke='%23aaa'/%3E%3C/svg%3E"); background-size: 6px 8px; }
.tree .l1 { margin-left: 17px; }
.tree .l2 { margin-left: 34px; }
.tree .l3 { margin-left: 51px; }
.tree .l4 { margin-left: 68px; }
.tree .l5 { margin-left: 85px; }
.tree .l6 { margin-left: 102px; }
.tree .l7 { margin-left: 119px; }
.sel span { height: 100%; padding: 0 3px 0 1px; margin-left: -1px; background: #c4dffc; }
.foot { flex: none; height: 19px; display: flex; border-top: 1px solid #555; background: #fff; }
.foot button { padding: 0 6px 0 7px; height: 17px; }
.foot .active { padding: 0 5px; background: #f0f0f0; border: 1px solid #888; border-top: 0; border-left: 0; }

.properties { flex: none; width: 395px; margin-left: 3px; display: flex; flex-direction: column; border: 0 solid #444; border-width: 0 1px 0 2px; }
.properties .head { padding-left: 0; }
.type { flex: none; height: 17px; margin: 11px 11px 0 10px; padding-left: 2px; font-size: 11px; border-color: #999; background-color: #fff; background-size: 7px 4px, 15px 100%; background-position: right 5px center, right; }
.picks { flex: none; display: flex; gap: 20px; padding: 14px 0 12px 17px; }
.picks svg { width: 14px; height: 14px; }
.sheet { flex: 1; min-height: 0; display: flex; flex-direction: column; margin-right: 2px; padding: 0 0 3px 1px; border-top: 2px solid #777; border-left: 1px solid #777; background: #f0f0f0; }
.sort { flex: none; height: 25px; display: flex; align-items: center; padding-left: 1px; gap: 3px; }
.sort svg { width: 14px; height: 14px; }
.sort .pressed { padding: 1px; border: 1px solid #555; border-radius: 3px; background: #d7dbe2; }
.sort .pressed svg { width: 16px; }
.sort .bar { width: 1px; height: 18px; margin: 0 3px 0 2px; background: #aaa; }
.gridbox { position: relative; flex: 1; min-height: 0; overflow: hidden; background: #fff; border: 1px solid #aaa; }
.gridbox table { position: relative; width: 100%; border-spacing: 0; table-layout: fixed; }
.c-mark { width: 17px; }
.c-name { width: 164px; }
.gridbox td, .gridbox th { height: 14px; padding: 0 0 0 4px; line-height: 13px; font-weight: normal; text-align: left; border-bottom: 1px solid #f2f4f8; white-space: nowrap; overflow: hidden; }
.gridbox tr:nth-child(5n) > * { height: 15px; }
.gridbox .m { background-color: #f0f4fb; border-color: #f0f4fb; }
.gridbox .cat th { background-color: #f0f4fb; font-weight: bold; color: #111; }
.gridbox .here { background: #eef3fa; }
.gridbox .v { border-left: 1px solid #f2f4f8; padding-left: 3px; font-size: 11px; font-weight: bold; color: #111; }
.gridbox .v.n { font-size: 10px; font-weight: normal; color: #2b2b2b; }
.gridbox .ro td, .gridbox .ro .v.n { color: #808080; }
.gridbox td.sub { padding-left: 22px; }
.gridbox i { display: inline-block; vertical-align: top; width: 18px; height: 12px; margin: 0 7px 0 -2px; border: 1px solid #333; background: #fff; }
.gridbox .open { background: url("data:image/svg+xml,%3Csvg xmlns='http://www.w3.org/2000/svg' viewBox='0 0 6 6'%3E%3Cpath d='M6 0v6H0z' fill='%23333'/%3E%3C/svg%3E") 7px center / 5px 5px no-repeat #f0f4fb; }
.gridbox .shut { background: url("data:image/svg+xml,%3Csvg xmlns='http://www.w3.org/2000/svg' viewBox='0 0 6 8'%3E%3Cpath d='M1 1v6l4-3z' fill='none' stroke='%23aaa'/%3E%3C/svg%3E") 7px center / 6px 8px no-repeat #f0f4fb; }
.marker { position: absolute; z-index: 1; left: 28px; top: 422px; width: 48px; height: 134px; mix-blend-mode: multiply; }
.hint { flex: none; height: 54px; margin-top: 3px; padding: 2px 4px; border: 1px solid #aaa; line-height: 13px; }
.hint h3 { font-weight: bold; color: #111; }

/* drawing and console */
.work { flex: 1; min-width: 0; margin-left: 4px; display: flex; flex-direction: column; border-left: 2px solid #555; }
.viewport { position: relative; flex: 1; min-height: 0; margin: 1px 1px 3px 0; border: solid #fff; border-width: 4px 0 0 2px; background: #000; }
.canvas { width: 100%; height: 100%; overflow: hidden; }
.plot { font: 300 36px Roboto, sans-serif; fill: url(#dash); }
.edge { position: absolute; right: 6px; top: 0; bottom: 0; width: 6px; background: linear-gradient(90deg, #0a1220, #2a4d7c, #0a1220); }
.doctabs { flex: none; height: 23px; display: flex; align-items: flex-start; border: solid #222; border-width: 1px 0; background: #fff; padding-right: 1px; }
.doctabs button { height: 13px; margin-top: 2px; padding: 0 8px 0 9px; border-right: 1px solid #999; }
.doctabs .second { padding-right: 9px; border: 0; }
.doctabs .active { height: 18px; margin: 0; padding: 0 5px; background: #ededed; border: 1px solid #999; border-top: 0; border-left: 0; }
.doctabs svg { margin: 6px 0 0 7px; }
.doctabs .dd { margin-left: auto; }
.command { flex: none; height: 203px; display: flex; flex-direction: column; margin-top: 2px; border-top: 2px solid #888; padding: 0 2px 6px 0; }
.command .head { border-color: #aaa; padding-left: 0; padding-right: 0; }
.console { flex: 1; min-height: 0; margin-left: 4px; display: grid; grid-template: 1fr 14px / 1fr 14px; border-left: 1px solid #ccc; background: #eee; }
.console textarea { resize: none; outline: 0; overflow: hidden; padding: 5px 4px; background: #fff; line-height: 13px; white-space: pre; }
.vbar { display: flex; flex-direction: column; align-items: center; padding: 4px 0; }
.vbar svg, .hbar svg { width: 9px; height: 9px; }
.thumb { width: 13px; height: 72px; margin-top: auto; margin-bottom: 4px; border: 1px solid #999; background: linear-gradient(#666 0 0) center 33px / 6px 1px no-repeat, linear-gradient(#666 0 0) center 36px / 6px 1px no-repeat, linear-gradient(90deg, #f2f2f2, #c4c4c4); }
.hbar { display: flex; justify-content: space-between; align-items: center; padding: 0 4px 0 3px; fill: #888; }

/* status bar */
.status { flex: none; height: 17px; display: flex; align-items: center; gap: 4px; padding: 5px 0 0 2px; overflow: hidden; background: #9cc3f2; color: #1d2c44; }
.status svg { width: 14px; height: 14px; }
.coord { margin-left: 2px; }
.lamp { margin-left: auto; }
.status a { color: #2727a0; text-decoration: none; }
.toggles { display: flex; gap: 4px; margin: 0 -5px 0 2px; }
.toggles .lit { background: #f8c988; }
```
